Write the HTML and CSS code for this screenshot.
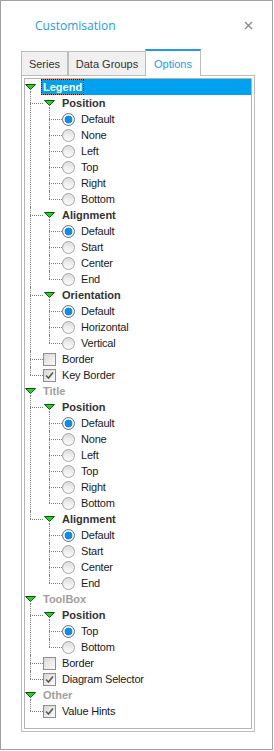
FILE: index.html
```html
<!DOCTYPE html>
<html lang="en">
	<head>
		<meta charset="utf-8"/>
		<title>Customisation</title>
		<!-- The panel styles-->
		<link rel="stylesheet" href="styles.css">
	</head>
	<body>
		<!--Customisation window-->
		<div class="window">
			<!--Title bar-->
			<div class="titlebar">
				<span class="title">Customisation</span>
				<span class="close" title="Close">
					<svg width="9" height="9" viewBox="0 0 9 9"><path d="M1,1 L8,8 M8,1 L1,8" stroke="#8a8a8a" stroke-width="1.4" fill="none"/></svg>
				</span>
			</div>
			<!--Tabs-->
			<div class="tabs">
				<div class="tab series">Series</div>
				<div class="tab groups">Data Groups</div>
				<div class="tab active">Options</div>
			</div>
			<!--Options page-->
			<div class="page">
				<ul class="tree">
					<!--Legend-->
					<li>
						<div class="row lv0 selected"><span class="icon"><svg class="tri" width="11" height="6" viewBox="0 0 11 6"><polygon points="0.5,0.5 10.5,0.5 5.5,5.5"/></svg></span><span class="label">Legend</span></div>
						<ul class="sub1">
							<li>
								<div class="row lv1"><span class="icon"><svg class="tri" width="11" height="6" viewBox="0 0 11 6"><polygon points="0.5,0.5 10.5,0.5 5.5,5.5"/></svg></span><span class="label">Position</span></div>
								<ul class="sub2">
									<li><div class="row lv2"><span class="icon"><span class="radio on"></span></span><span class="label">Default</span></div></li>
									<li><div class="row lv2"><span class="icon"><span class="radio"></span></span><span class="label">None</span></div></li>
									<li><div class="row lv2"><span class="icon"><span class="radio"></span></span><span class="label">Left</span></div></li>
									<li><div class="row lv2"><span class="icon"><span class="radio"></span></span><span class="label">Top</span></div></li>
									<li><div class="row lv2"><span class="icon"><span class="radio"></span></span><span class="label">Right</span></div></li>
									<li><div class="row lv2"><span class="icon"><span class="radio"></span></span><span class="label">Bottom</span></div></li>
								</ul>
							</li>
							<li>
								<div class="row lv1"><span class="icon"><svg class="tri" width="11" height="6" viewBox="0 0 11 6"><polygon points="0.5,0.5 10.5,0.5 5.5,5.5"/></svg></span><span class="label">Alignment</span></div>
								<ul class="sub2">
									<li><div class="row lv2"><span class="icon"><span class="radio on"></span></span><span class="label">Default</span></div></li>
									<li><div class="row lv2"><span class="icon"><span class="radio"></span></span><span class="label">Start</span></div></li>
									<li><div class="row lv2"><span class="icon"><span class="radio"></span></span><span class="label">Center</span></div></li>
									<li><div class="row lv2"><span class="icon"><span class="radio"></span></span><span class="label">End</span></div></li>
								</ul>
							</li>
							<li>
								<div class="row lv1"><span class="icon"><svg class="tri" width="11" height="6" viewBox="0 0 11 6"><polygon points="0.5,0.5 10.5,0.5 5.5,5.5"/></svg></span><span class="label">Orientation</span></div>
								<ul class="sub2">
									<li><div class="row lv2"><span class="icon"><span class="radio on"></span></span><span class="label">Default</span></div></li>
									<li><div class="row lv2"><span class="icon"><span class="radio"></span></span><span class="label">Horizontal</span></div></li>
									<li><div class="row lv2"><span class="icon"><span class="radio"></span></span><span class="label">Vertical</span></div></li>
								</ul>
							</li>
							<li><div class="row lv1 leaf"><span class="icon"><span class="check"></span></span><span class="label">Border</span></div></li>
							<li><div class="row lv1 leaf"><span class="icon"><span class="check on"><svg width="11" height="11" viewBox="0 0 11 11"><path d="M2,5.5 L4.5,8 L9,2.5" stroke="#5a5a5a" stroke-width="1.6" fill="none"/></svg></span></span><span class="label">Key Border</span></div></li>
						</ul>
					</li>
					<!--Title-->
					<li>
						<div class="row lv0"><span class="icon"><svg class="tri" width="11" height="6" viewBox="0 0 11 6"><polygon points="0.5,0.5 10.5,0.5 5.5,5.5"/></svg></span><span class="label">Title</span></div>
						<ul class="sub1">
							<li>
								<div class="row lv1"><span class="icon"><svg class="tri" width="11" height="6" viewBox="0 0 11 6"><polygon points="0.5,0.5 10.5,0.5 5.5,5.5"/></svg></span><span class="label">Position</span></div>
								<ul class="sub2">
									<li><div class="row lv2"><span class="icon"><span class="radio on"></span></span><span class="label">Default</span></div></li>
									<li><div class="row lv2"><span class="icon"><span class="radio"></span></span><span class="label">None</span></div></li>
									<li><div class="row lv2"><span class="icon"><span class="radio"></span></span><span class="label">Left</span></div></li>
									<li><div class="row lv2"><span class="icon"><span class="radio"></span></span><span class="label">Top</span></div></li>
									<li><div class="row lv2"><span class="icon"><span class="radio"></span></span><span class="label">Right</span></div></li>
									<li><div class="row lv2"><span class="icon"><span class="radio"></span></span><span class="label">Bottom</span></div></li>
								</ul>
							</li>
							<li>
								<div class="row lv1"><span class="icon"><svg class="tri" width="11" height="6" viewBox="0 0 11 6"><polygon points="0.5,0.5 10.5,0.5 5.5,5.5"/></svg></span><span class="label">Alignment</span></div>
								<ul class="sub2">
									<li><div class="row lv2"><span class="icon"><span class="radio on"></span></span><span class="label">Default</span></div></li>
									<li><div class="row lv2"><span class="icon"><span class="radio"></span></span><span class="label">Start</span></div></li>
									<li><div class="row lv2"><span class="icon"><span class="radio"></span></span><span class="label">Center</span></div></li>
									<li><div class="row lv2"><span class="icon"><span class="radio"></span></span><span class="label">End</span></div></li>
								</ul>
							</li>
						</ul>
					</li>
					<!--ToolBox-->
					<li>
						<div class="row lv0"><span class="icon"><svg class="tri" width="11" height="6" viewBox="0 0 11 6"><polygon points="0.5,0.5 10.5,0.5 5.5,5.5"/></svg></span><span class="label">ToolBox</span></div>
						<ul class="sub1">
							<li>
								<div class="row lv1"><span class="icon"><svg class="tri" width="11" height="6" viewBox="0 0 11 6"><polygon points="0.5,0.5 10.5,0.5 5.5,5.5"/></svg></span><span class="label">Position</span></div>
								<ul class="sub2">
									<li><div class="row lv2"><span class="icon"><span class="radio on"></span></span><span class="label">Top</span></div></li>
									<li><div class="row lv2"><span class="icon"><span class="radio"></span></span><span class="label">Bottom</span></div></li>
								</ul>
							</li>
							<li><div class="row lv1 leaf"><span class="icon"><span class="check"></span></span><span class="label">Border</span></div></li>
							<li><div class="row lv1 leaf"><span class="icon"><span class="check on"><svg width="11" height="11" viewBox="0 0 11 11"><path d="M2,5.5 L4.5,8 L9,2.5" stroke="#5a5a5a" stroke-width="1.6" fill="none"/></svg></span></span><span class="label">Diagram Selector</span></div></li>
						</ul>
					</li>
					<!--Other-->
					<li>
						<div class="row lv0"><span class="icon"><svg class="tri" width="11" height="6" viewBox="0 0 11 6"><polygon points="0.5,0.5 10.5,0.5 5.5,5.5"/></svg></span><span class="label">Other</span></div>
						<ul class="sub1">
							<li><div class="row lv1 leaf"><span class="icon"><span class="check on"><svg width="11" height="11" viewBox="0 0 11 11"><path d="M2,5.5 L4.5,8 L9,2.5" stroke="#5a5a5a" stroke-width="1.6" fill="none"/></svg></span></span><span class="label">Value Hints</span></div></li>
						</ul>
					</li>
				</ul>
			</div>
		</div>
	</body>
</html>
```

FILE: styles.css
```css
/*Basic body design*/
body {
	font-family: "Liberation Sans", Arial, sans-serif;
	background-color: #fff;
	font-size: 11px;
	color: #1a1a1a;
	margin: 0;
}

/*Window frame*/
div.window {
	border: 1px solid #a0a0a0;
	box-sizing: border-box;
	height: 750px;
	width: 273px;
}

/*Title bar*/
div.titlebar {
	justify-content: space-between;
	padding: 0 19px 0 34px;
	align-items: center;
	display: flex;
	height: 48px;
}

div.titlebar span.title {
	font-family: "Open Sans", sans-serif;
	font-size: 12px;
	color: #1e9be9;
}

div.titlebar span.close svg {
	display: block;
}

/*Tabs row*/
div.tabs {
	align-items: flex-end;
	margin-left: 20px;
	position: relative;
	display: flex;
	height: 26px;
	z-index: 1;
}

div.tab {
	border: 1px solid #bdbdbd;
	background-color: #f0f0f0;
	justify-content: center;
	box-sizing: border-box;
	align-items: center;
	border-bottom: none;
	display: flex;
	height: 24px;
	color: #333;
}

div.tab.series {
	width: 47px;
}

div.tab.groups {
	width: 78px;
}

div.tab.active {
	border-top: 2px solid #1e9be9;
	background-color: #fff;
	margin-bottom: -1px;
	margin-left: -1px;
	color: #1e9be9;
	height: 27px;
	width: 56px;
}

/*Tab page*/
div.page {
	border: 1px solid #bdbdbd;
	box-sizing: border-box;
	margin-left: 20px;
	height: 657px;
	padding: 2px;
	width: 234px;
}

/*Tree view*/
ul.tree, ul.tree ul {
	list-style: none;
	padding: 0;
	margin: 0;
}

ul.tree {
	border: 1px solid #b4b4b4;
	box-sizing: border-box;
	overflow: hidden;
	height: 100%;
}

ul.tree li {
	position: relative;
}

div.row {
	white-space: nowrap;
	align-items: center;
	line-height: 16px;
	display: flex;
	height: 16px;
}

div.row.lv1 {
	padding-left: 19px;
}

div.row.lv2 {
	padding-left: 38px;
}

div.row span.icon {
	justify-content: center;
	align-items: center;
	position: relative;
	display: flex;
	height: 16px;
	width: 11px;
	flex: none;
	z-index: 1;
}

div.row span.label {
	margin-left: 5px;
	padding: 0 2px;
}

/*Group headers*/
div.row.lv0 span.label {
	font-weight: bold;
	color: #a0a0a0;
}

div.row.lv1 span.label {
	font-weight: bold;
	color: #333;
}

div.row.lv1.leaf span.label, div.row.lv2 span.label {
	font-weight: normal;
	letter-spacing: -0.2px;
	color: #1a1a1a;
}

/*Selected node*/
div.row.selected span.label {
	background: linear-gradient(#00a2f0, #00a2f0) padding-box, #e8782a border-box;
	border: 1px dotted #1a1a1a;
	box-sizing: border-box;
	line-height: 14px;
	padding: 0 1px;
	height: 16px;
	color: #fff;
}

div.row.selected::after {
	background-color: #00a2f0;
	align-self: stretch;
	content: "";
	flex: 1;
}

/*Expand triangle*/
svg.tri {
	display: block;
}

svg.tri polygon {
	stroke: #1c4a1c;
	fill: #14e014;
}

/*Tree dotted lines*/
ul.tree ul > li::before {
	border-left: 1px dotted #7a7a7a;
	position: absolute;
	content: "";
	bottom: 0;
	top: 0;
}

ul.tree ul > li::after {
	border-top: 1px dotted #7a7a7a;
	position: absolute;
	content: "";
	width: 13px;
	top: 8px;
}

ul.tree ul > li:first-child::before {
	top: -4px;
}

ul.tree ul > li:last-child::before {
	bottom: auto;
	height: 8px;
}

ul.tree ul > li:first-child:last-child::before {
	height: 12px;
}

ul.sub1 > li::before, ul.sub1 > li::after {
	left: 5px;
}

ul.sub2 > li::before, ul.sub2 > li::after {
	left: 24px;
}

/*Radio buttons*/
span.radio {
	background: linear-gradient(#dedede, #fdfdfd);
	border: 1px solid #a4a4a4;
	box-sizing: border-box;
	border-radius: 50%;
	flex: none;
	height: 13px;
	width: 13px;
}

span.radio.on {
	background: radial-gradient(circle, #0b8ef2 0 3.6px, #f4f4f4 4.2px);
	border-color: #707070;
}

/*Check boxes*/
span.check {
	background: linear-gradient(135deg, #d8d8d8, #fbfbfb);
	border: 1px solid #8e8e8e;
	box-sizing: border-box;
	flex: none;
	height: 13px;
	width: 13px;
}

span.check svg {
	display: block;
}
```
